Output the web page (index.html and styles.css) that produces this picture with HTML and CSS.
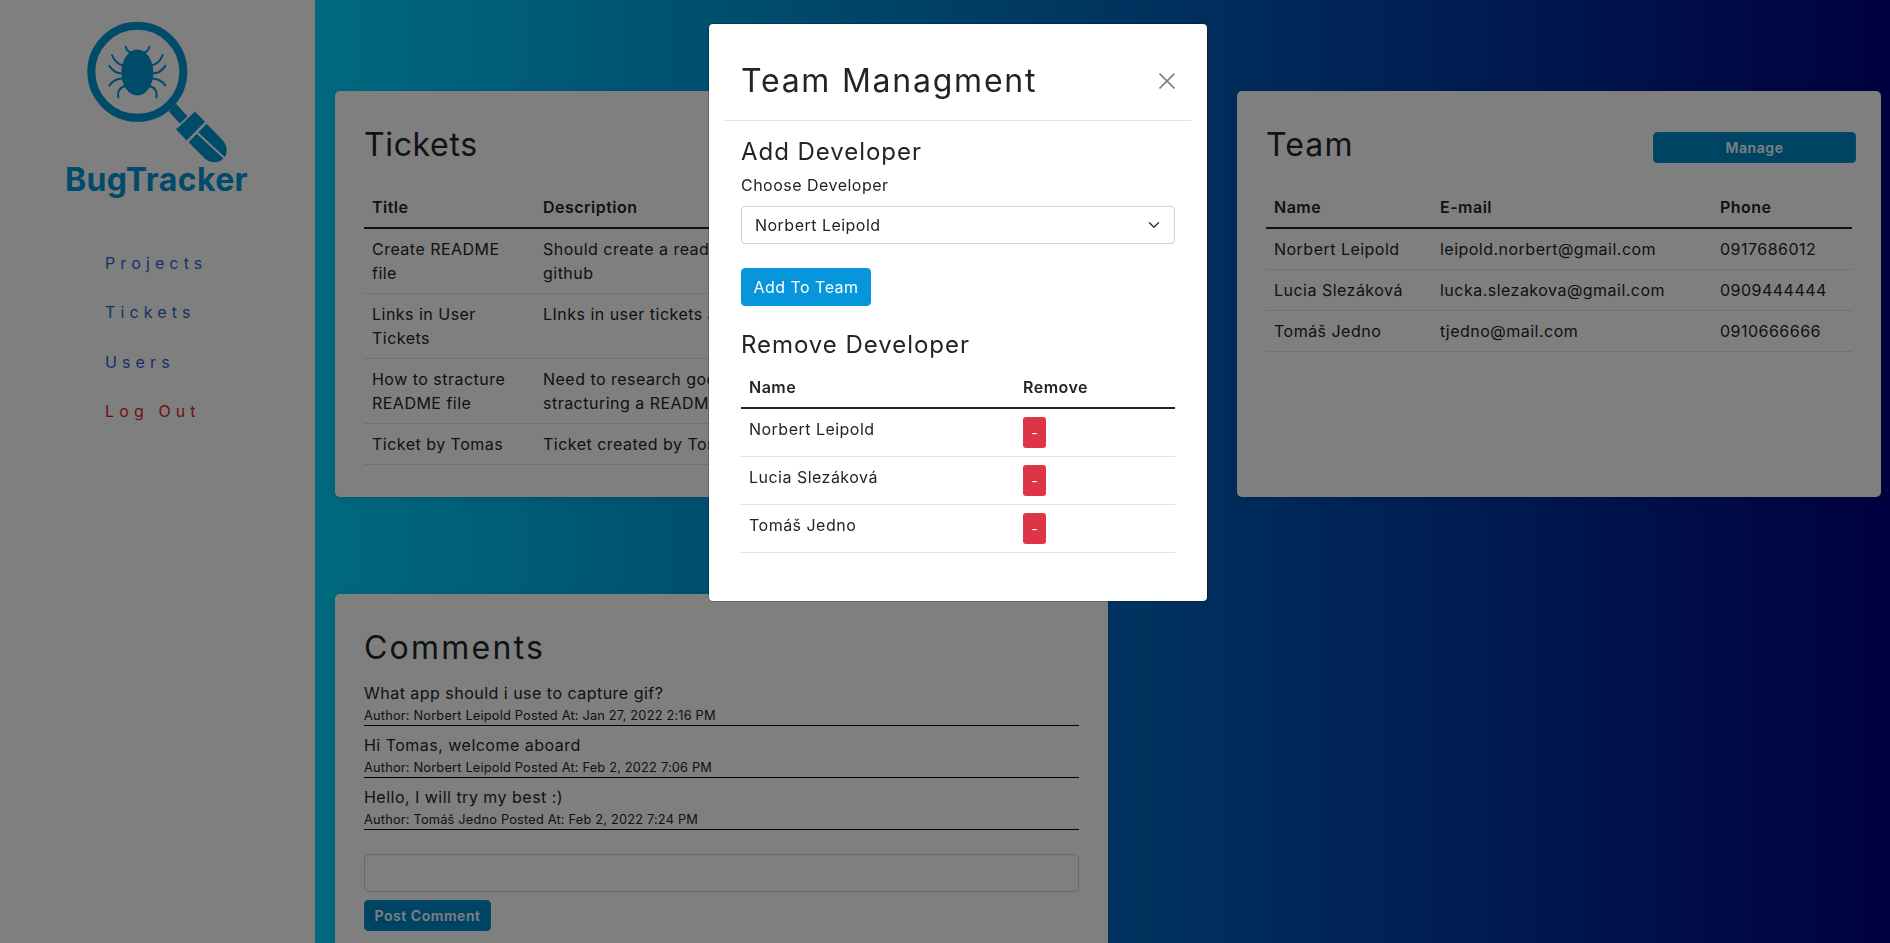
FILE: index.html
```html
<!DOCTYPE html>
<html lang="en">
<head>
  <meta charset="UTF-8">
  <title>BugTracker</title>
  <link rel="stylesheet" href="styles.css">
</head>
<body>

  <div class="layout">
    <aside class="sidebar">
      <svg class="logo" viewBox="0 0 540 470" fill="none">
        <circle cx="202" cy="185" r="138" stroke="#0095d5" stroke-width="24"/>
        <path d="M296 303L318 281L352 318L330 340Z" fill="#0095d5"/>
        <path d="M375 304L405 335L350 391L318 358Z" fill="#0095d5"/>
        <path d="M410 341L458 390C472 406 474 428 463 442C450 459 425 462 405 446L356 396Z" fill="#0095d5"/>
        <path d="M378 365L464 444" stroke="#fff" stroke-width="6"/>
        <ellipse cx="202" cy="187" rx="48" ry="69" fill="#0095d5"/>
        <g stroke="#0095d5" stroke-width="6" stroke-linecap="round">
          <path d="M167 110C170 122 178 127 187 128"/>
          <path d="M238 110C235 122 227 127 218 128"/>
          <path d="M126 135C133 152 143 163 160 166"/>
          <path d="M278 135C271 152 261 163 244 166"/>
          <path d="M118 167C128 182 140 190 156 190"/>
          <path d="M286 167C276 182 264 190 248 190"/>
          <path d="M118 226C128 212 140 205 158 205"/>
          <path d="M286 226C276 212 264 205 246 205"/>
          <path d="M145 262C141 242 150 230 170 227"/>
          <path d="M259 262C263 242 254 230 234 227"/>
        </g>
      </svg>
      <div class="brand">BugTracker</div>
      <nav class="side-nav">
        <a href="#">Projects</a>
        <a href="#">Tickets</a>
        <a href="#">Users</a>
        <a href="#" class="logout">Log Out</a>
      </nav>
    </aside>

    <main class="content">
      <section class="card tickets-card">
        <h2>Tickets</h2>
        <table class="table tickets-table">
          <thead>
            <tr><th class="col-title">Title</th><th>Description</th></tr>
          </thead>
          <tbody>
            <tr><td>Create README<br>file</td><td>Should create a readme file for this project on<br>github</td></tr>
            <tr><td>Links in User<br>Tickets</td><td>LInks in user tickets are not working</td></tr>
            <tr><td>How to stracture<br>README file</td><td>Need to research good practices of<br>stracturing a README file</td></tr>
            <tr><td>Ticket by Tomas</td><td>Ticket created by Tomas</td></tr>
          </tbody>
        </table>
      </section>

      <section class="card team-card">
        <div class="card-head">
          <h2>Team</h2>
          <button class="btn btn-small btn-manage">Manage</button>
        </div>
        <table class="table team-table">
          <thead>
            <tr><th class="col-name">Name</th><th class="col-mail">E-mail</th><th>Phone</th></tr>
          </thead>
          <tbody>
            <tr><td>Norbert Leipold</td><td>leipold.norbert@gmail.com</td><td>0917686012</td></tr>
            <tr><td>Lucia Slezáková</td><td>lucka.slezakova@gmail.com</td><td>0909444444</td></tr>
            <tr><td>Tomáš Jedno</td><td>tjedno@mail.com</td><td>0910666666</td></tr>
          </tbody>
        </table>
      </section>

      <section class="card comments-card">
        <h2>Comments</h2>
        <div class="comment">
          <p>What app should i use to capture gif?</p>
          <small>Author: Norbert Leipold Posted At: Jan 27, 2022 2:16 PM</small>
        </div>
        <div class="comment">
          <p>Hi Tomas, welcome aboard</p>
          <small>Author: Norbert Leipold Posted At: Feb 2, 2022 7:06 PM</small>
        </div>
        <div class="comment">
          <p>Hello, I will try my best :)</p>
          <small>Author: Tomáš Jedno Posted At: Feb 2, 2022 7:24 PM</small>
        </div>
        <input type="text" class="field comment-input">
        <button class="btn btn-small btn-post">Post Comment</button>
      </section>
    </main>
  </div>

  <div class="backdrop"></div>

  <div class="modal">
    <div class="modal-head">
      <h2>Team Managment</h2>
      <svg class="close" viewBox="0 0 16 16"><path d="M.5.5l15 15M15.5.5l-15 15" stroke="#000" stroke-width="1.6"/></svg>
    </div>
    <div class="modal-body">
      <h4>Add Developer</h4>
      <label for="devSelect">Choose Developer</label>
      <select id="devSelect" class="field dev-select">
        <option>Norbert Leipold</option>
        <option>Lucia Slezáková</option>
        <option>Tomáš Jedno</option>
      </select>
      <button class="btn btn-add">Add To Team</button>
      <h4 class="remove-title">Remove Developer</h4>
      <table class="table remove-table">
        <thead>
          <tr><th class="col-dev">Name</th><th>Remove</th></tr>
        </thead>
        <tbody>
          <tr><td>Norbert Leipold</td><td><button class="btn-remove">-</button></td></tr>
          <tr><td>Lucia Slezáková</td><td><button class="btn-remove">-</button></td></tr>
          <tr><td>Tomáš Jedno</td><td><button class="btn-remove">-</button></td></tr>
        </tbody>
      </table>
    </div>
  </div>

</body>
</html>
```

FILE: styles.css
```css
html, body {
  height: 943px;
  margin: 0;
  overflow: hidden;
}
body {
  font-family: Inter, "Noto Sans", sans-serif;
  font-size: 16px;
  line-height: 24px;
  letter-spacing: .03em;
  color: #212529;
  background: #fff;
}
h2, h4, p {
  margin: 0;
  font-weight: 400;
}
h2 {
  font-size: 32px;
  line-height: 38px;
}
h4 {
  font-size: 24px;
  line-height: 29px;
  letter-spacing: .04em;
}

.layout {
  display: flex;
  height: 943px;
}

/* sidebar */
.sidebar {
  width: 315px;
  flex: none;
  padding-top: 10px;
  box-sizing: border-box;
}
.logo {
  display: block;
  width: 180px;
  height: 157px;
  margin: 0 0 -6px 70px;
}
.brand {
  margin: 0 0 0 65px;
  font-size: 32px;
  line-height: 38px;
  font-weight: 700;
  letter-spacing: .012em;
  color: #0095d5;
}
.side-nav {
  display: flex;
  flex-direction: column;
  gap: 25.3px;
  margin: 52px 0 0 105px;
}
.side-nav a {
  font-size: 16px;
  letter-spacing: .32em;
  text-decoration: none;
  color: #2f5fd0;
}
.side-nav .logout {
  color: #dc1f26;
}

/* main area */
.content {
  flex: 1;
  display: grid;
  grid-template-columns: 860px 644px;
  grid-template-rows: 406px auto;
  column-gap: 42px;
  row-gap: 97px;
  align-content: start;
  padding: 91px 0 0 20px;
  background: linear-gradient(to right, #00d4ff, #000080);
}
.card {
  background: #fff;
  border-radius: 5px;
  padding: 29px;
  box-sizing: border-box;
  box-shadow: 0 2px 10px rgba(0,0,0,0.1);
}
.tickets-card h2 { letter-spacing: .02em; }
.team-card h2 { letter-spacing: .035em; }
.comments-card {
  width: 773px;
  height: 420px;
  padding-top: 29px;
}
.comments-card h2 {
  letter-spacing: .07em;
  margin-bottom: 7px;
}
.card-head {
  display: flex;
  justify-content: space-between;
  align-items: flex-start;
}
.card h2 {
  margin-top: 6px;
}

/* tables */
.table {
  width: 100%;
  border-collapse: collapse;
  table-layout: fixed;
}
.table th {
  box-sizing: border-box;
  padding: 8px;
  text-align: left;
  font-weight: 600;
  border-bottom: 2px solid #212529;
}
.table td {
  padding: 8px;
  vertical-align: top;
  border-bottom: 1px solid #dee2e6;
}
.tickets-table, .team-table {
  margin-top: 23px;
}
.col-title { width: 171px; }
.team-table {
  width: 586px;
}
.col-name { width: 166px; }
.col-mail { width: 280px; }
.col-dev { width: 274px; }

/* buttons */
.btn {
  border: 1px solid #0795dc;
  border-radius: 4px;
  background: #0795dc;
  color: #fff;
  font-family: inherit;
  cursor: pointer;
}
.btn-small {
  height: 31px;
  padding: 0 8px;
  font-size: 14px;
  font-weight: 600;
  letter-spacing: .04em;
  background: #0088c8;
}
.btn-manage {
  width: 203px;
  margin-top: 12px;
  margin-right: -4px;
}
.btn-post {
  display: block;
  width: 127px;
  margin-top: 8px;
  padding: 0;
  white-space: nowrap;
}
.btn-add {
  display: block;
  width: 130px;
  height: 38px;
  margin-top: 24px;
  font-size: 16px;
  letter-spacing: inherit;
}
.btn-remove {
  display: block;
  width: 23px;
  height: 31px;
  padding: 0;
  border: 0;
  border-radius: 3px;
  background: #dc3545;
  color: #fff;
  font-size: 14px;
  font-family: inherit;
}

/* comments */
.comment {
  height: 52px;
  border-bottom: 1px solid #000;
  box-sizing: border-box;
}
.comment p {
  padding-top: 7px;
}
.comment small {
  display: block;
  margin-top: 2px;
  font-size: 12.8px;
  line-height: 18px;
  letter-spacing: .015em;
}
.field {
  display: block;
  width: 100%;
  height: 38px;
  border: 1px solid #ced4da;
  border-radius: 4px;
  box-sizing: border-box;
  background: #fff;
  font-family: inherit;
  font-size: 16px;
  letter-spacing: inherit;
  color: #212529;
}
.comment-input {
  margin-top: 24px;
}

/* modal */
.backdrop {
  position: fixed;
  inset: 0;
  background: rgba(0,0,0,.5);
}
.modal {
  position: absolute;
  top: 23px;
  left: 708px;
  width: 500px;
  height: 579px;
  box-sizing: border-box;
  background: #fff;
  background-clip: padding-box;
  border: 1px solid rgba(0,0,0,.2);
  border-radius: 5px;
}
.modal-head {
  display: flex;
  justify-content: space-between;
  align-items: center;
  margin: 0 16px;
  padding: 38px 16px 20px;
  border-bottom: 1px solid #dee2e6;
}
.modal-head h2 {
  letter-spacing: .055em;
}
.close {
  width: 16px;
  height: 16px;
  opacity: .5;
}
.modal-body {
  padding: 16px 32px;
}
.modal-body label {
  display: block;
  margin-top: 7px;
}
.dev-select {
  margin-top: 9px;
  padding: 0 36px 0 13px;
  appearance: none;
  background: #fff url("data:image/svg+xml,%3csvg xmlns='http://www.w3.org/2000/svg' viewBox='0 0 16 16'%3e%3cpath fill='none' stroke='%23343a40' stroke-linecap='round' stroke-linejoin='round' stroke-width='2' d='M2 5l6 6 6-6'/%3e%3c/svg%3e") no-repeat right 12px center / 16px 12px;
}
.remove-title {
  margin-top: 24px;
}
.remove-table {
  margin-top: 8px;
}
```
